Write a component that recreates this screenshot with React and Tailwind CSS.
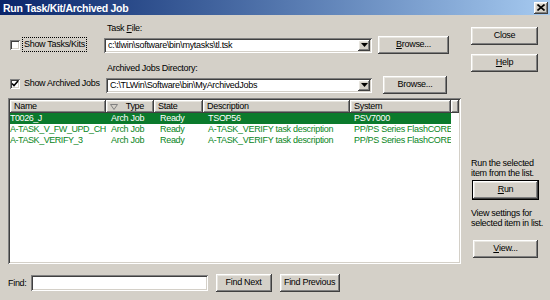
import React from 'react';

const font = { fontFamily: '"Liberation Sans", Arial, sans-serif' };

const raised =
  'bg-[#d4d0c8] shadow-[inset_-1px_-1px_0_#404040,inset_1px_1px_0_#ffffff,inset_-2px_-2px_0_#808080,inset_2px_2px_0_#e8e6e0]';
const sunken =
  'bg-white shadow-[inset_1px_1px_0_#808080,inset_-1px_-1px_0_#ffffff,inset_2px_2px_0_#404040,inset_-2px_-2px_0_#d4d0c8]';

function Button({ children, className = '', isDefault = false }) {
  return (
    <div
      className={`${raised} h-[18px] flex items-center justify-center whitespace-nowrap text-black ${
        isDefault ? 'outline outline-1 outline-black' : ''
      } ${className}`}
    >
      {children}
    </div>
  );
}

function Combo({ value, className = '' }) {
  return (
    <div className={`${sunken} h-[15px] flex items-center pl-[4px] pr-[2px] ${className}`}>
      <span className="flex-1 truncate leading-[11px]">{value}</span>
      <div className={`${raised} w-[12px] h-[11px] flex items-center justify-center`}>
        <svg width="7" height="4" viewBox="0 0 7 4">
          <path d="M0 0h7L3.5 4z" fill="#000" />
        </svg>
      </div>
    </div>
  );
}

function Checkbox({ checked, label, focus = false }) {
  return (
    <div className="flex items-center gap-[3px] whitespace-nowrap">
      <div className={`${sunken} w-[10px] h-[10px] flex items-center justify-center`}>
        {checked && (
          <svg width="8" height="8" viewBox="0 0 8 8">
            <path d="M1 3.5l2 2 4-4.5" stroke="#000" strokeWidth="1.6" fill="none" />
          </svg>
        )}
      </div>
      <span
        className={`leading-[11px] px-[1px] py-[1px] ${
          focus ? 'outline outline-1 outline-dotted outline-black' : ''
        }`}
      >
        {label}
      </span>
    </div>
  );
}

const cols = 'grid grid-cols-[96px_48px_49px_147px_101px_1fr]';

const rows = [
  { name: 'T0026_J', type: 'Arch Job', state: 'Ready', desc: 'TSOP56', sys: 'PSV7000', sel: true },
  { name: 'A-TASK_V_FW_UPD_CH', type: 'Arch Job', state: 'Ready', desc: 'A-TASK_VERIFY task description', sys: 'PP/PS Series FlashCORE' },
  { name: 'A-TASK_VERIFY_3', type: 'Arch Job', state: 'Ready', desc: 'A-TASK_VERIFY task description', sys: 'PP/PS Series FlashCORE' },
];

function HeaderCell({ children, className = '' }) {
  return (
    <div className={`${raised} h-[13px] flex items-center px-[4px] leading-[11px] whitespace-nowrap ${className}`}>
      {children}
    </div>
  );
}

export default function App() {
  return (
    <div
      className="w-[550px] h-[300px] bg-[#d4d0c8] text-[9px] tracking-[-0.3px] text-black overflow-hidden flex flex-col"
      style={font}
    >
      {/* Title bar */}
      <div className="h-[15px] flex items-center justify-between pl-[3px] pr-[2px] bg-gradient-to-r from-[#0a246a] to-[#a6caf0]">
        <span className="text-white font-bold text-[10.5px] tracking-[-0.3px] leading-[12px]">
          Run Task/Kit/Archived Job
        </span>
        <div className={`${raised} w-[14px] h-[12px] flex items-center justify-center`}>
          <svg width="8" height="7" viewBox="0 0 8 7">
            <path d="M0.5 0.5l7 6M7.5 0.5l-7 6" stroke="#000" strokeWidth="1.6" />
          </svg>
        </div>
      </div>

      <div className="flex-1 flex pl-[8px] pb-[8px]">
        {/* Left column */}
        <div className="w-[453px] flex flex-col">
          <div className="h-[83px] flex">
            <div className="w-[96px] pl-[2px] flex flex-col">
              <div className="mt-[23px]">
                <Checkbox label="Show Tasks/Kits" focus />
              </div>
              <div className="mt-[26px]">
                <Checkbox label="Show Archived Jobs" checked />
              </div>
            </div>
            <div className="flex-1 flex flex-col">
              <div className="mt-[8px] pl-[3px] leading-[11px]">
                Task <span className="underline">F</span>ile:
              </div>
              <div className="mt-[2px] h-[18px] flex items-center">
                <Combo value="c:\tlwin\software\bin\mytasks\tl.tsk" className="w-[268px]" />
                <Button className="ml-[6px] w-[71px]">
                  <span className="underline">B</span>rowse...
                </Button>
              </div>
              <div className="mt-[9px] pl-[3px] leading-[11px]">Archived Jobs Directory:</div>
              <div className="mt-[2px] h-[18px] flex items-center">
                <Combo value="C:\TLWin\Software\bin\MyArchivedJobs" className="w-[266px] ml-[2px]" />
                <Button className="ml-[11px] w-[64px]">Browse...</Button>
              </div>
            </div>
          </div>

          {/* List view */}
          <div className={`${sunken} h-[166px] p-[2px] flex flex-col`}>
            <div className={cols}>
              <HeaderCell>Name</HeaderCell>
              <HeaderCell className="justify-between">
                <svg width="8" height="6" viewBox="0 0 8 6">
                  <path d="M0.5 0.5h7L4 5.5z" stroke="#808080" fill="none" />
                </svg>
                <span className="pr-[6px]">Type</span>
              </HeaderCell>
              <HeaderCell>State</HeaderCell>
              <HeaderCell>Description</HeaderCell>
              <HeaderCell>System</HeaderCell>
              <HeaderCell />
            </div>
            {rows.map(r => (
              <div key={r.name} className={`${cols} h-[11px] leading-[11px]`}>
                {[
                  [r.name, 'tracking-[-0.45px]'],
                  [r.type, 'pl-[5px]'],
                  [r.state, 'pl-[6px]'],
                  [r.desc, 'pl-[5px]'],
                  [r.sys, 'pl-[4px]'],
                ].map(([t, pad], i) => (
                  <div
                    key={i}
                    className={`${pad} whitespace-nowrap overflow-hidden ${
                      r.sel ? 'bg-[#0b7a2c] text-white' : 'text-[#08851a]'
                    }`}
                  >
                    {t}
                  </div>
                ))}
                <div />
              </div>
            ))}
          </div>

          {/* Find row */}
          <div className="mt-[10px] h-[18px] flex items-center">
            <span className="leading-[11px]">Find:</span>
            <div className={`${sunken} h-[16px] w-[177px] ml-[4px]`} />
            <Button className="ml-[8px] w-[56px]">Find Next</Button>
            <Button className="ml-[8px] w-[60px]">Find Previous</Button>
          </div>
        </div>

        {/* Right column */}
        <div className="ml-[10px] w-[67px] flex flex-col whitespace-nowrap">
          <Button className="mt-[12px]">Close</Button>
          <Button className="mt-[9px]">
            <span className="underline">H</span>elp
          </Button>
          <div className="mt-[86px] leading-[10px]">
            Run the selected
            <br />
            item from the list.
          </div>
          <Button className="mt-[3px] w-[65px] ml-[2px]" isDefault>
            <span className="underline">R</span>un
          </Button>
          <div className="mt-[9px] leading-[10px]">
            View settings for
            <br />
            selected item in list.
          </div>
          <Button className="mt-[12px] w-[65px] ml-[2px]">
            <span className="underline">V</span>iew...
          </Button>
        </div>
      </div>
    </div>
  );
}
